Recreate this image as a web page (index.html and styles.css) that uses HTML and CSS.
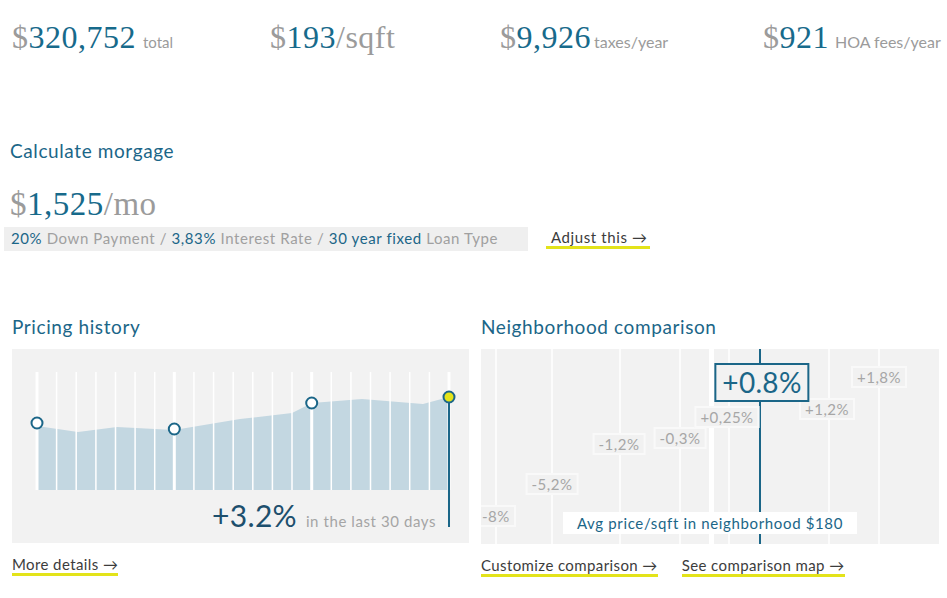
FILE: index.html
```html
<!DOCTYPE html>
<html lang="en">
<head>
<meta charset="utf-8">
<title>Listing summary</title>
<link rel="stylesheet" href="styles.css">
</head>
<body>
<div class="stats">
  <div class="stat"><span class="cur">$</span><span class="num">320,752</span><span class="unit u-total">total</span></div>
  <div class="stat"><span class="cur">$</span><span class="num">193</span><span class="slash">/sqft</span></div>
  <div class="stat"><span class="cur">$</span><span class="num">9,926</span><span class="unit u-tax">taxes/year</span></div>
  <div class="stat"><span class="cur">$</span><span class="num">921</span><span class="unit u-hoa">HOA fees/year</span></div>
</div>

<section class="mortgage">
  <h2 class="title">Calculate morgage</h2>
  <div class="monthly"><span class="cur">$</span><span class="num">1,525</span><span class="slash">/mo</span></div>
  <div class="terms-row">
    <div class="terms"><span class="hl">20%</span> Down Payment / <span class="hl">3,83%</span> Interest Rate / <span class="hl">30 year fixed</span> Loan Type</div>
    <a class="link adjust" href="#">Adjust this →</a>
  </div>
</section>

<div class="panels">
  <section class="panel">
    <h2 class="title">Pricing history</h2>
    <div class="chart history">
      <svg class="history-svg" width="457" height="194" viewBox="0 0 457 194">
        <path d="M25 77 L66 83 L105 78 L143 80 L162 81 L228 70 L280 64 L300 54 L350 50 L411 55 L437 48 L437 141 L25 141 Z" fill="#c3d7e1"/>
        <g stroke="#ffffff" stroke-width="1.5">
          <line x1="44.6" y1="23" x2="44.6" y2="141"/>
          <line x1="64.2" y1="23" x2="64.2" y2="141"/>
          <line x1="83.9" y1="23" x2="83.9" y2="141"/>
          <line x1="103.5" y1="23" x2="103.5" y2="141"/>
          <line x1="123.1" y1="23" x2="123.1" y2="141"/>
          <line x1="142.7" y1="23" x2="142.7" y2="141"/>
          <line x1="181.9" y1="23" x2="181.9" y2="141"/>
          <line x1="201.6" y1="23" x2="201.6" y2="141"/>
          <line x1="221.2" y1="23" x2="221.2" y2="141"/>
          <line x1="240.8" y1="23" x2="240.8" y2="141"/>
          <line x1="260.4" y1="23" x2="260.4" y2="141"/>
          <line x1="280" y1="23" x2="280" y2="141"/>
          <line x1="319.3" y1="23" x2="319.3" y2="141"/>
          <line x1="338.9" y1="23" x2="338.9" y2="141"/>
          <line x1="358.5" y1="23" x2="358.5" y2="141"/>
          <line x1="378.1" y1="23" x2="378.1" y2="141"/>
          <line x1="397.7" y1="23" x2="397.7" y2="141"/>
          <line x1="417.4" y1="23" x2="417.4" y2="141"/>
        </g>
        <g stroke="#ffffff" stroke-width="3">
          <line x1="25" y1="23" x2="25" y2="141"/>
          <line x1="162.3" y1="23" x2="162.3" y2="141"/>
          <line x1="299.7" y1="23" x2="299.7" y2="141"/>
          <line x1="437" y1="23" x2="437" y2="141"/>
        </g>
        <line x1="437" y1="48" x2="437" y2="178" stroke="#1b6688" stroke-width="2"/>
        <g stroke="#1b6688" stroke-width="2" fill="#ffffff">
          <circle cx="25" cy="74" r="5.5"/>
          <circle cx="162.3" cy="80" r="5.5"/>
          <circle cx="299.7" cy="54" r="5.5"/>
          <circle cx="437" cy="48" r="5.5" fill="#e4e41a"/>
        </g>
      </svg>
      <div class="caption"><span class="pct">+3.2%</span><span class="period">in the last 30 days</span></div>
    </div>
    <div class="links"><a class="link" href="#">More details →</a></div>
  </section>

  <section class="panel">
    <h2 class="title">Neighborhood comparison</h2>
    <div class="chart hood">
      <svg class="hood-svg" width="458" height="195" viewBox="0 0 458 195">
        <g stroke="#ffffff" stroke-width="1.5">
          <line x1="15" y1="0" x2="15" y2="195"/>
          <line x1="71" y1="0" x2="71" y2="195"/>
          <line x1="139" y1="0" x2="139" y2="195"/>
          <line x1="199" y1="0" x2="199" y2="195"/>
          <line x1="248" y1="0" x2="248" y2="195"/>
          <line x1="348" y1="0" x2="348" y2="195"/>
          <line x1="398" y1="0" x2="398" y2="195"/>
        </g>
        <rect x="228" y="0" width="5" height="195" fill="#ffffff"/>
        <line x1="279" y1="0" x2="279" y2="195" stroke="#1b6688" stroke-width="2"/>
      </svg>
      <span class="tag tag-edge" style="left:0px;top:156px">-8%</span>
      <span class="tag" style="left:71px;top:124px">-5,2%</span>
      <span class="tag" style="left:138px;top:84px">-1,2%</span>
      <span class="tag" style="left:199px;top:78px">-0,3%</span>
      <span class="tag" style="left:246px;top:57px">+0,25%</span>
      <span class="tag" style="left:346px;top:49px">+1,2%</span>
      <span class="tag" style="left:398px;top:17px">+1,8%</span>
      <span class="tag tag-main" style="left:281px;top:14px">+0.8%</span>
      <span class="avg">Avg price/sqft in neighborhood $180</span>
    </div>
    <div class="links"><a class="link" href="#">Customize comparison →</a><a class="link" href="#">See comparison map →</a></div>
  </section>
</div>
</body>
</html>
```

FILE: styles.css
```css
* { box-sizing: border-box; }

html, body {
  margin: 0;
  padding: 0;
  background: #ffffff;
}

body {
  font-family: Lato, "Open Sans", sans-serif;
  color: #9a9a9a;
  width: 947px;
  height: 598px;
  overflow: hidden;
}

.cur { color: #9b9b9b; }
.num { color: #176a8b; }
.slash { color: #9b9b9b; }

.stats {
  display: grid;
  grid-template-columns: 258px 230px 263px auto;
  padding: 17px 0 0 12px;
  font-family: "Liberation Serif", serif;
  font-size: 32px;
  line-height: 40px;
  letter-spacing: 0.5px;
  white-space: nowrap;
}

.unit {
  font-family: Lato, sans-serif;
  font-size: 15px;
  line-height: 1;
  letter-spacing: 0;
  color: #9b9b9b;
}
.u-total { margin-left: 7px; }
.u-tax { margin-left: 3px; font-size: 16px; }
.u-hoa { margin-left: 6px; font-size: 16px; }

.title {
  margin: 0;
  font-family: Lato, sans-serif;
  font-weight: 400;
  font-size: 19px;
  line-height: 24px;
  letter-spacing: 0.6px;
  color: #1b6688;
}

.mortgage {
  padding: 82px 0 0 10px;
}

.monthly {
  margin-top: 21px;
  font-family: "Liberation Serif", serif;
  font-size: 33px;
  line-height: 40px;
  letter-spacing: 0.5px;
}

.terms-row {
  display: flex;
  align-items: flex-start;
  margin: 3px 0 0 -6px;
}

.terms {
  width: 524px;
  height: 24px;
  padding-left: 7px;
  background: #efefef;
  font-size: 15px;
  line-height: 23px;
  letter-spacing: 0.6px;
  color: #a0a0a0;
  white-space: nowrap;
}
.hl { color: #1b6688; }

.link {
  display: inline-block;
  font-size: 15px;
  line-height: 17px;
  letter-spacing: 0.4px;
  color: #3c3c3c;
  text-decoration: none;
  border-bottom: 3px solid #e3e31a;
  white-space: nowrap;
}

.adjust {
  margin: 2px 0 0 18px;
  padding: 0 2px 0 5px;
  letter-spacing: 0.6px;
}

.panels {
  display: grid;
  grid-template-columns: 457px 458px;
  column-gap: 12px;
  padding: 64px 8px 0 12px;
}

.panel .title { margin-bottom: 10px; }

.chart {
  background: #f2f2f2;
  height: 194px;
}

.history {
  display: grid;
}
.history-svg,
.history .caption {
  grid-area: 1 / 1;
}
.history-svg { display: block; }

.caption {
  align-self: end;
  justify-self: end;
  display: flex;
  align-items: baseline;
  gap: 9px;
  margin: 0 33px 13px 0;
}
.pct {
  font-size: 30px;
  line-height: 30px;
  letter-spacing: 0.3px;
  color: #1d4f6d;
}
.period {
  font-size: 15px;
  line-height: 15px;
  letter-spacing: 0.58px;
  color: #a5a5a5;
}

.hood {
  position: relative;
  height: 195px;
  overflow: hidden;
}
.hood-svg { display: block; }

.tag {
  position: absolute;
  transform: translateX(-50%);
  padding: 1px 4px;
  font-size: 15px;
  line-height: 16px;
  letter-spacing: 0.5px;
  color: #a6a6a6;
  background: #f1f1f1;
  border: 2px solid #f9f9f9;
  white-space: nowrap;
}
.tag-edge { transform: none; padding-left: 1px; border-left: 0; }

.tag-main {
  padding: 0 6px;
  font-size: 28px;
  line-height: 35px;
  letter-spacing: 0.3px;
  color: #1b6688;
  background: #f2f2f2;
  border: 2px solid #1b6688;
}

.avg {
  position: absolute;
  left: 82px;
  top: 163px;
  width: 294px;
  height: 22px;
  background: #ffffff;
  color: #1b6688;
  font-size: 15px;
  line-height: 22px;
  letter-spacing: 0.65px;
  text-align: center;
  white-space: nowrap;
}

.links {
  display: flex;
  gap: 24px;
  margin-top: 13px;
}
```
